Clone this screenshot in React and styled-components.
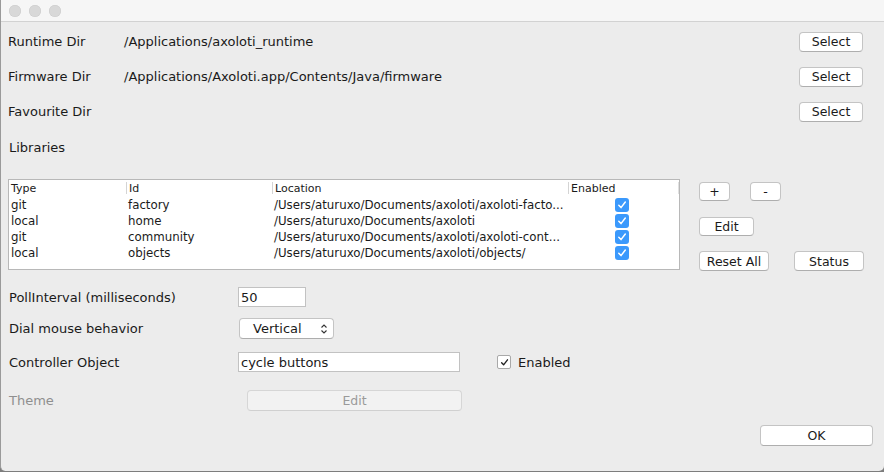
import React from 'react'
import styled, { createGlobalStyle } from 'styled-components'

const Global = createGlobalStyle`
  html, body {
    margin: 0;
    padding: 0;
    background: #7d7d7d;
  }
  body {
    font-family: "DejaVu Sans", "Liberation Sans", sans-serif;
    font-size: 13px;
    color: #1a1a1a;
  }
`;

const Window = styled.div`
  width: 884px;
  height: 471px;
  background: #ececec;
  border-radius: 0 0 5px 5px;
  box-sizing: border-box;
  border-left: 1px solid #9a9a9a;
  display: flex;
  flex-direction: column;
  overflow: hidden;
`;

const TitleBar = styled.div`
  height: 21px;
  flex: none;
  background: #f6f6f6;
  border-bottom: 1px solid #d2d2d2;
  display: flex;
  align-items: center;
  gap: 8px;
  padding-left: 8px;
`;

const Light = styled.span`
  width: 12px;
  height: 12px;
  border-radius: 50%;
  background: #d8d8d8;
  box-shadow: inset 0 0 0 0.5px #cbcbcb;
`;

const Content = styled.div`
  flex: 1;
  display: flex;
  flex-direction: column;
  padding: 9px 21px 0 7px;
`;

const DirRow = styled.div`
  height: 21px;
  display: flex;
  align-items: center;
  margin-bottom: 14px;
`;

const DirLabel = styled.div`
  width: 116px;
  flex: none;
`;

const DirPath = styled.div`
  flex: 1;
`;

const Button = styled.button`
  font-family: "DejaVu Sans", "Liberation Sans", sans-serif;
  font-size: 12.5px;
  color: ${({ disabled }) => (disabled ? '#9a9a9a' : '#1a1a1a')};
  width: ${({ w }) => w}px;
  height: ${({ h }) => h || 20}px;
  padding: 0;
  background: ${({ disabled }) => (disabled ? '#f2f2f2' : '#ffffff')};
  border: 1px solid ${({ disabled }) => (disabled ? '#d6d6d6' : '#c4c4c4')};
  border-bottom-color: ${({ disabled }) => (disabled ? '#d0d0d0' : '#aeaeae')};
  border-radius: 4px;
  flex: none;
`;

const SectionTitle = styled.div`
  height: 20px;
  display: flex;
  align-items: center;
  margin-top: 1px;
  margin-left: 1px;
`;

const LibArea = styled.div`
  display: flex;
  margin-top: 22px;
`;

const Table = styled.div`
  width: 674px;
  height: 91px;
  box-sizing: border-box;
  background: #fff;
  border: 1px solid #b8b8b8;
  display: grid;
  grid-template-columns: 117px 146px 296px 111px;
  grid-auto-rows: 16px;
  align-content: start;
  font-size: 11.8px;
`;

const HeadCell = styled.div`
  display: flex;
  align-items: center;
  padding-left: 2px;
  border-left: ${({ first }) => (first ? 'none' : '1px solid #d4d4d4')};
  height: 12px;
  margin-top: 2px;
  font-size: 11px;
  ${({ last }) => last && 'border-right: 1px solid #e0e0e0;'}
`;

const Cell = styled.div`
  display: flex;
  align-items: center;
  padding-top: 2px;
  padding-left: ${({ center }) => (center ? 0 : 2)}px;
  white-space: nowrap;
  overflow: hidden;
  justify-content: ${({ center }) => (center ? 'center' : 'flex-start')};
`;

const BlueCheck = styled.span`
  width: 14px;
  height: 14px;
  border-radius: 3px;
  background: #3b99fc;
  display: flex;
  align-items: center;
  justify-content: center;
  margin-right: 3px;
`;

const SideButtons = styled.div`
  margin-left: 19px;
  padding-top: 3px;
  display: flex;
  flex-direction: column;
`;

const ButtonRow = styled.div`
  display: flex;
  gap: ${({ gap }) => gap}px;
  margin-top: ${({ mt }) => mt || 0}px;
`;

const SettingRow = styled.div`
  height: ${({ h }) => h || 20}px;
  display: flex;
  align-items: center;
  margin-top: ${({ mt }) => mt}px;
  color: ${({ muted }) => (muted ? '#8f8f8f' : 'inherit')};
`;

const SettingLabel = styled.div`
  width: ${({ w }) => w || 229}px;
  flex: none;
  padding-left: 1px;
`;

const TextInput = styled.div`
  width: ${({ w }) => w}px;
  height: 20px;
  box-sizing: border-box;
  background: #fff;
  border: 1px solid #c2c2c2;
  display: flex;
  align-items: center;
  padding-left: 2px;
`;

const SelectBox = styled.div`
  width: 95px;
  height: 21px;
  box-sizing: border-box;
  margin-left: 1px;
  background: #fff;
  border: 1px solid #c4c4c4;
  border-bottom-color: #adadad;
  border-radius: 4px;
  display: flex;
  align-items: center;
  justify-content: space-between;
  padding: 0 5px 0 13px;
`;

const CheckLabel = styled.label`
  display: flex;
  align-items: center;
  gap: 7px;
  margin-left: 37px;
`;

const PlainCheck = styled.span`
  width: 12px;
  height: 12px;
  background: #fff;
  border: 1px solid #a9a9a9;
  border-radius: 2px;
  display: flex;
  align-items: center;
  justify-content: center;
`;

const Footer = styled.div`
  display: flex;
  justify-content: flex-end;
  margin-top: 14px;
  margin-right: -10px;
`;

const Tick = ({ color = '#fff', size = 10 }) => (
  <svg width={size} height={size} viewBox="0 0 10 10">
    <path d="M1.8 5.3 L4 7.6 L8.3 2" fill="none" stroke={color} strokeWidth="1.5" strokeLinecap="round" strokeLinejoin="round" />
  </svg>
);

const Updown = () => (
  <svg width="8" height="12" viewBox="0 0 8 12">
    <path d="M1.5 4.5 L4 2 L6.5 4.5 M1.5 7.5 L4 10 L6.5 7.5" fill="none" stroke="#333" strokeWidth="1.1" />
  </svg>
);

const dirs = [
  ['Runtime Dir', '/Applications/axoloti_runtime'],
  ['Firmware Dir', '/Applications/Axoloti.app/Contents/Java/firmware'],
  ['Favourite Dir', ''],
];

const libs = [
  ['git', 'factory', '/Users/aturuxo/Documents/axoloti/axoloti-facto...'],
  ['local', 'home', '/Users/aturuxo/Documents/axoloti'],
  ['git', 'community', '/Users/aturuxo/Documents/axoloti/axoloti-cont...'],
  ['local', 'objects', '/Users/aturuxo/Documents/axoloti/objects/'],
];

export default function App() {
  return (
    <Window>
      <Global />
      <TitleBar>
        <Light />
        <Light />
        <Light />
      </TitleBar>
      <Content>
        {dirs.map(([label, path]) => (
          <DirRow key={label}>
            <DirLabel>{label}</DirLabel>
            <DirPath>{path}</DirPath>
            <Button w={64}>Select</Button>
          </DirRow>
        ))}
        <SectionTitle>Libraries</SectionTitle>
        <LibArea>
          <Table>
            <HeadCell first>Type</HeadCell>
            <HeadCell>Id</HeadCell>
            <HeadCell>Location</HeadCell>
            <HeadCell last>Enabled</HeadCell>
            {libs.map(([type, id, loc]) => (
              <React.Fragment key={id}>
                <Cell>{type}</Cell>
                <Cell>{id}</Cell>
                <Cell>{loc}</Cell>
                <Cell center>
                  <BlueCheck>
                    <Tick />
                  </BlueCheck>
                </Cell>
              </React.Fragment>
            ))}
          </Table>
          <SideButtons>
            <ButtonRow gap={20}>
              <Button w={31} h={19}>+</Button>
              <Button w={31} h={19}>-</Button>
            </ButtonRow>
            <ButtonRow mt={16}>
              <Button w={55} h={19}>Edit</Button>
            </ButtonRow>
            <ButtonRow gap={25} mt={15}>
              <Button w={70}>Reset All</Button>
              <Button w={70}>Status</Button>
            </ButtonRow>
          </SideButtons>
        </LibArea>
        <SettingRow mt={16}>
          <SettingLabel>PollInterval (milliseconds)</SettingLabel>
          <TextInput w={68}>50</TextInput>
        </SettingRow>
        <SettingRow mt={11} h={21}>
          <SettingLabel>Dial mouse behavior</SettingLabel>
          <SelectBox>
            <span>Vertical</span>
            <Updown />
          </SelectBox>
        </SettingRow>
        <SettingRow mt={13}>
          <SettingLabel>Controller Object</SettingLabel>
          <TextInput w={222}>cycle buttons</TextInput>
          <CheckLabel>
            <PlainCheck>
              <Tick color="#222" size={9} />
            </PlainCheck>
            Enabled
          </CheckLabel>
        </SettingRow>
        <SettingRow mt={18} h={21} muted>
          <SettingLabel w={238}>Theme</SettingLabel>
          <Button w={215} h={21} disabled>Edit</Button>
        </SettingRow>
        <Footer>
          <Button w={113} h={21}>OK</Button>
        </Footer>
      </Content>
    </Window>
  );
}
